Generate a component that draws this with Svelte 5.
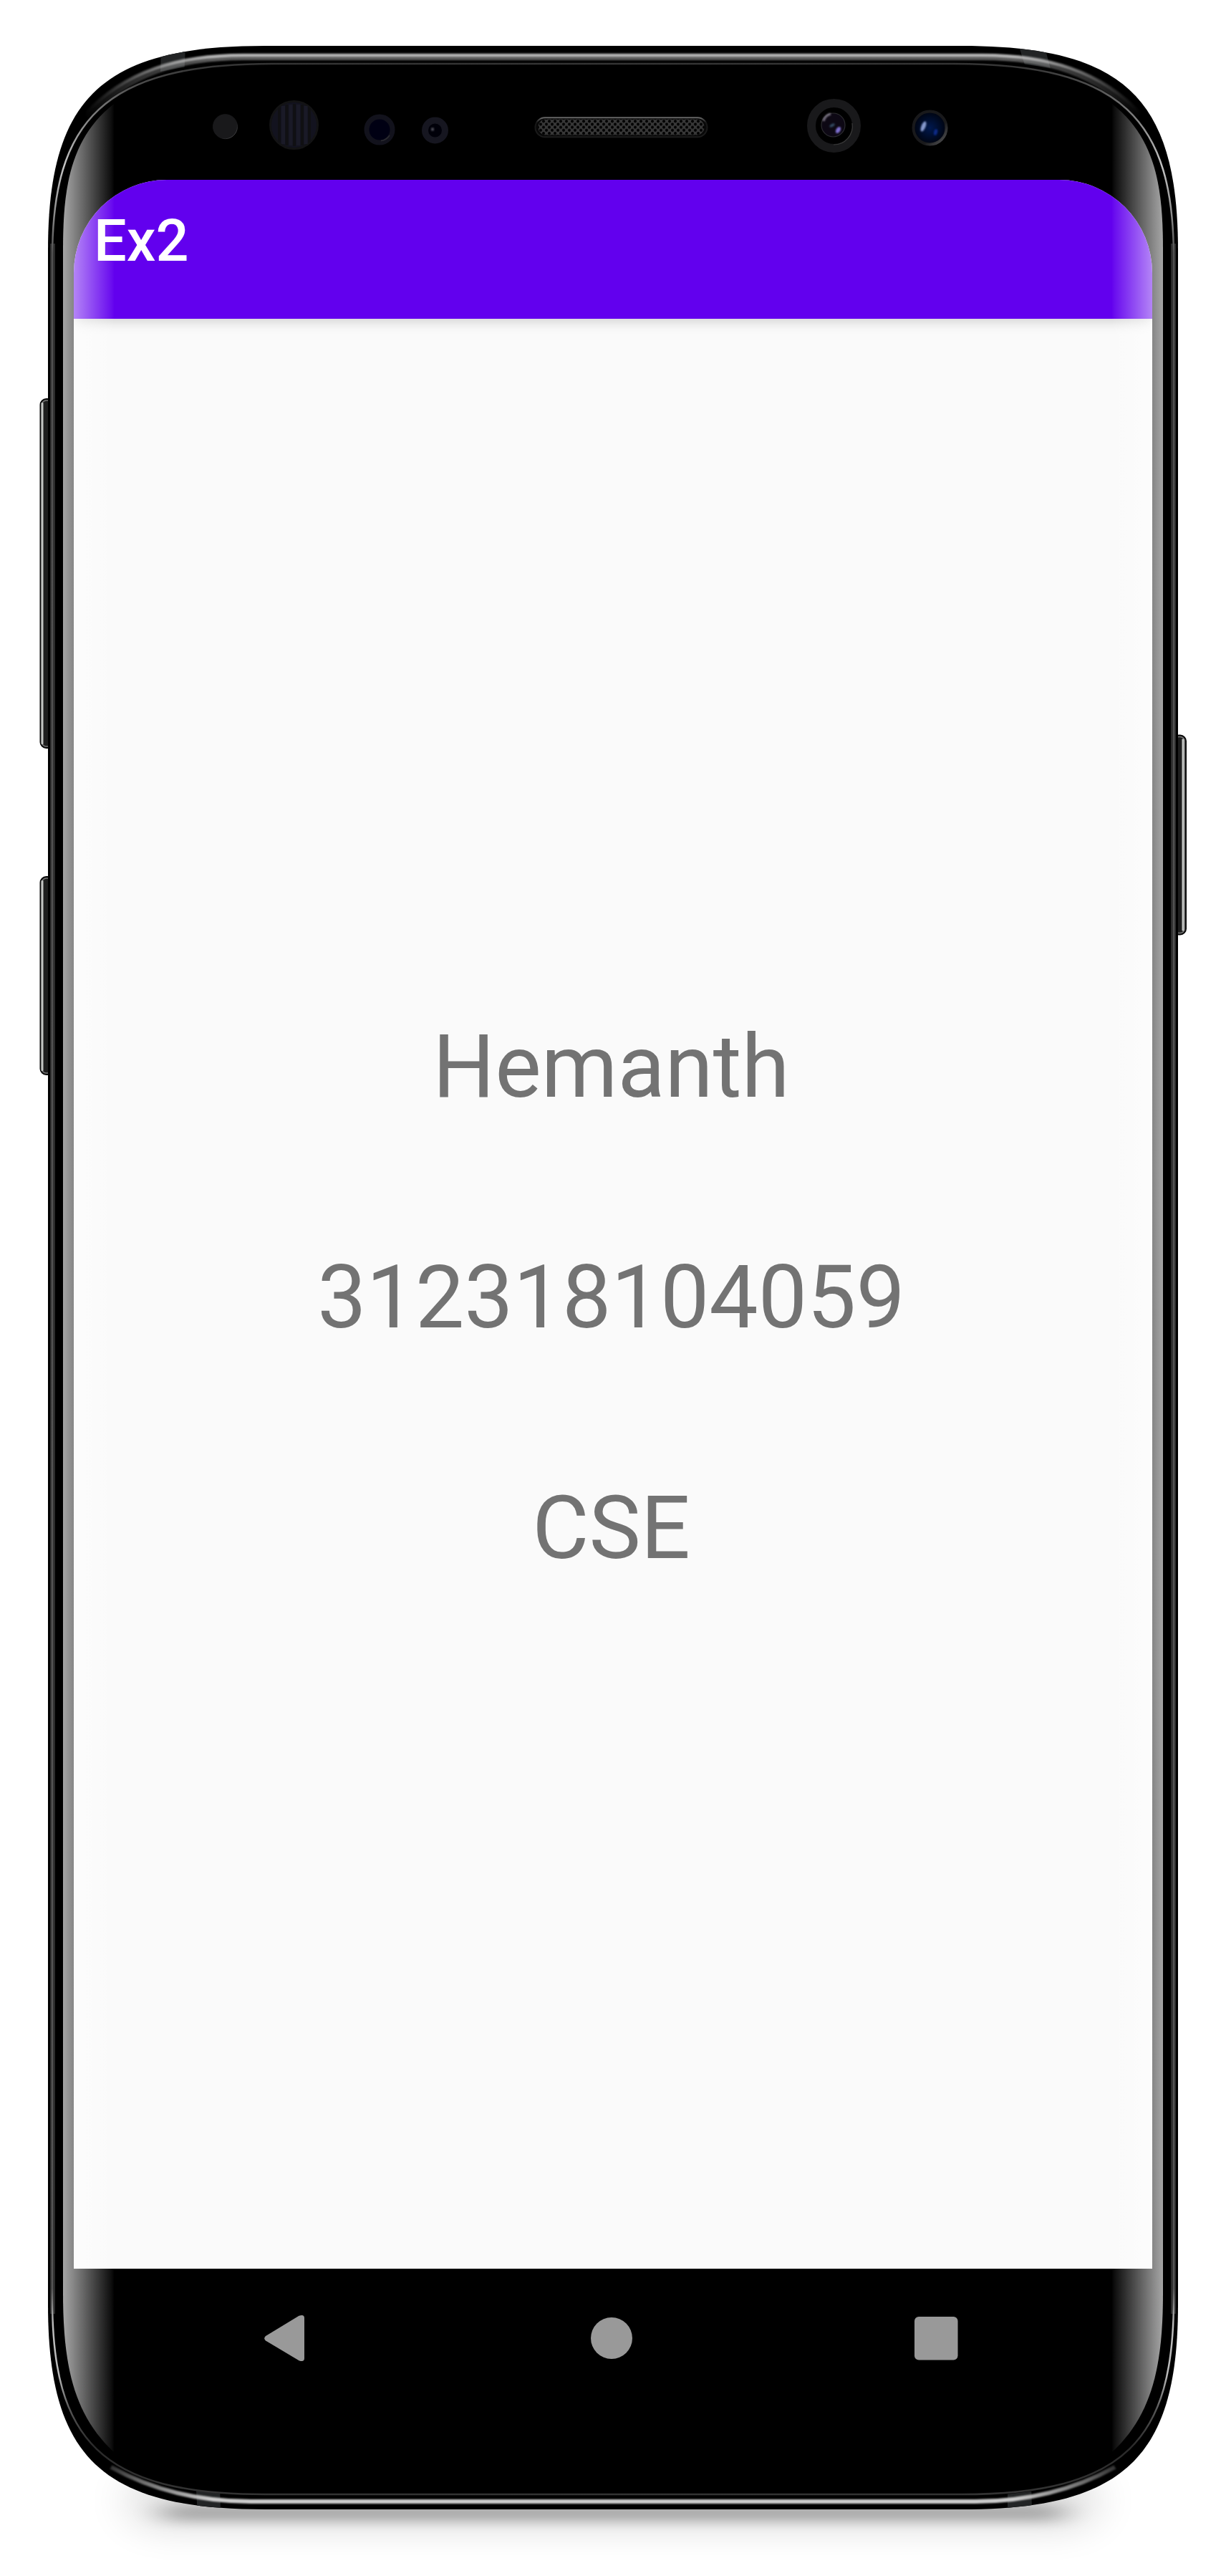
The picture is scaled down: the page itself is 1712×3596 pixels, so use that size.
<script>
  const lines = ['Hemanth', '312318104059', 'CSE'];

  const body =
    'M67 350C67 137 142 64 370 64H1342C1570 64 1645 137 1645 350V3217C1645 3430 1570 3503 1342 3503H370C142 3503 67 3430 67 3217Z';
  const innerLine =
    'M73 360C73 169 144 89 380 89H1332C1568 89 1639 169 1639 360V3210C1639 3405 1572 3482 1342 3482H370C140 3482 73 3405 73 3210Z';
  const topBand = 'M118 160C175 98 250 77 340 77H1372C1462 77 1537 98 1594 160';
  const topBandSoft = 'M122 164C179 102 250 80 340 80H1372C1462 80 1533 102 1590 164';
  const bottomBand = 'M155 3444C220 3480 290 3492 350 3492H1362C1422 3492 1492 3480 1557 3444';

  // Volume and assistant keys on the left, power key on the right
  const keys = [
    { x: 55.5, y: 556, h: 489, lit: 58 },
    { x: 55.5, y: 1223, h: 278, lit: 58 },
    { x: 1637, y: 1025.5, h: 280, lit: 1651 }
  ];
</script>

<div class="stage">
  <svg class="layer" viewBox="0 0 1712 3596" aria-hidden="true">
    <defs>
      <filter id="soft" filterUnits="userSpaceOnUse" x="0" y="3300" width="1712" height="296"><feGaussianBlur stdDeviation="30 24" /></filter>
      <filter id="tight" filterUnits="userSpaceOnUse" x="0" y="3300" width="1712" height="296"><feGaussianBlur stdDeviation="22 8" /></filter>
      <filter id="edge" filterUnits="userSpaceOnUse" x="0" y="0" width="1712" height="3596"><feGaussianBlur stdDeviation="1.2" /></filter>
      <linearGradient id="band" gradientUnits="userSpaceOnUse" x1="118" y1="0" x2="1594" y2="0">
        <stop offset="0" stop-color="#ccc" stop-opacity="0" />
        <stop offset=".05" stop-color="#ccc" stop-opacity=".5" />
        <stop offset=".12" stop-color="#ccc" />
        <stop offset=".88" stop-color="#ccc" />
        <stop offset=".95" stop-color="#ccc" stop-opacity=".5" />
        <stop offset="1" stop-color="#ccc" stop-opacity="0" />
      </linearGradient>
      <linearGradient id="thin" gradientUnits="userSpaceOnUse" x1="0" y1="88" x2="0" y2="3483">
        <stop offset="0" stop-color="#333" />
        <stop offset=".008" stop-color="#4a4a4a" />
        <stop offset=".025" stop-color="#888" />
        <stop offset=".042" stop-color="#c4c4c4" />
        <stop offset=".058" stop-color="#999" />
        <stop offset=".078" stop-color="#505050" />
        <stop offset=".915" stop-color="#555" />
        <stop offset=".93" stop-color="#bbb" />
        <stop offset=".95" stop-color="#bbb" />
        <stop offset=".965" stop-color="#555" />
        <stop offset=".98" stop-color="#2a2a2a" />
        <stop offset="1" stop-color="#333" />
      </linearGradient>
      <clipPath id="bodyClip"><path d={body} /></clipPath>
      <pattern id="mesh" width="8" height="8.4" patternUnits="userSpaceOnUse" x="757" y="167.2">
        <rect width="8" height="8.4" fill="#373737" />
        <circle cx="2" cy="2.1" r="2" />
        <circle cx="6" cy="6.3" r="2" />
      </pattern>
      <linearGradient id="grilleEdge" x1="0" y1="0" x2="0" y2="1">
        <stop offset="0" stop-color="#666" />
        <stop offset=".25" stop-color="#161616" />
        <stop offset="1" stop-color="#1c1c1c" />
      </linearGradient>
      <radialGradient id="lens"><stop offset="0" stop-color="#00184e" /><stop offset="1" stop-color="#00040f" /></radialGradient>
      <linearGradient id="rim" x1="0" y1="0" x2="1" y2="1">
        <stop offset="0" stop-color="#19191b" />
        <stop offset=".65" stop-color="#19191b" />
        <stop offset=".9" stop-color="#48484a" />
      </linearGradient>
      <filter id="glint"><feGaussianBlur stdDeviation="1" /></filter>
    </defs>

    <rect x="180" y="3450" width="1352" height="82" rx="40" fill="#000" opacity=".12" filter="url(#soft)" />
    <rect x="228" y="3496" width="1256" height="24" rx="10" fill="#000" opacity=".26" filter="url(#tight)" />

    {#each keys as key}
      <rect x={key.x + 1} y={key.y + 1} width="18" height={key.h - 2} rx="8" fill="#1e1e1e" stroke="#0a0a0a" stroke-width="2" />
      <rect x={key.x + 3} y={key.y + 3} width="14" height={key.h - 6} rx="6" fill="none" stroke="#777" stroke-width="1.6" />
      <rect x={key.lit - 0.5} y={key.y + 6} width="3" height={key.h - 12} rx="1" fill="#c4c6c4" />
    {/each}

    <path d={body} />
    <g clip-path="url(#bodyClip)">
      <path d="M73.5 340V3230M1638.500 340V3230" stroke="#2c2c2c" stroke-width="7" />
      <path d="M225 70L259 64L257.700 93.500L224 100ZM1422 62L1459 66L1466.700 95L1430.700 89.500ZM274 3477L307.300 3480.700L308 3503H275.500ZM1407 3481.700L1440.300 3477.700L1441 3503H1407Z" fill="#222425" />
      <path d={innerLine} fill="none" stroke="url(#thin)" stroke-width="2.500" />
      <g fill="none" stroke="url(#band)" filter="url(#edge)">
        <path d={topBandSoft} stroke-width="8" opacity=".45" />
        <path d={topBand} stroke-width="4.500" opacity=".8" />
        <path d={bottomBand} stroke-width="6" />
      </g>
    </g>

    <!-- Sensors and cameras -->
    <circle cx="314.500" cy="176.700" r="17" fill="#19191b" stroke="url(#rim)" />
    <circle cx="410.500" cy="174.500" r="33" fill="#13131f" stroke="#131314" stroke-width="3" />
    <path d="M390 150V199M400.500 146V203M411 145V204M422 146V203M432 150V199" stroke="#101013" stroke-width="4" />
    <path d="M395.500 148V201M406 146V203M416.500 146V203M427 148V201" stroke="#1a1a27" stroke-width="5" />
    <circle cx="530" cy="181" r="18" fill="#000013" stroke="#12121c" stroke-width="7" />
    <path d="M544 189A16.500 16.500 0 0 1 532 196.500" fill="none" stroke="#2b2b31" stroke-width="1.500" />
    <circle cx="607.500" cy="182" r="14" fill="#000009" stroke="#161620" stroke-width="9" />
    <circle cx="604" cy="180.500" r="2.200" fill="#50505a" filter="url(#glint)" />

    <rect x="747.500" y="164.300" width="240" height="27" rx="13.500" fill="#080808" stroke="url(#grilleEdge)" stroke-width="2" />
    <rect x="751.500" y="166.500" width="232" height="22" rx="11" fill="url(#mesh)" />

    <circle cx="1164.500" cy="175.500" r="31.500" fill="#000" stroke="#19191b" stroke-width="12" />
    <path d="M1190 172A26 26 0 0 1 1164 202" fill="none" stroke="#3a3a3a" stroke-width="1.200" />
    <circle cx="1163.500" cy="174.500" r="16.500" fill="#0d0814" stroke="#2c2c30" stroke-width="1.200" />
    <g filter="url(#glint)">
      <path d="M1150 169Q1152 161 1160 159" fill="none" stroke="#77717f" stroke-width="3" />
      <ellipse cx="1170.500" cy="181.500" rx="3" ry="5" transform="rotate(30 1170.500 181.500)" fill="#7e70cf" />
      <ellipse cx="1162" cy="175" rx="4" ry="2" transform="rotate(-30 1162 175)" fill="#31485f" />
    </g>
    <circle cx="1298.500" cy="178.500" r="23" fill="url(#lens)" stroke="url(#rim)" stroke-width="4" />
    <g filter="url(#glint)">
      <ellipse cx="1289.500" cy="176.500" rx="3" ry="7.500" transform="rotate(22 1289.500 176.500)" fill="#8598cc" />
      <ellipse cx="1306.500" cy="184.500" rx="2.500" ry="4.500" transform="rotate(15 1306.500 184.500)" fill="#082a86" />
    </g>
  </svg>

  <main class="screen">
    <header><h1>Ex2</h1></header>
    <section>
      {#each lines as line}
        <p>{line}</p>
      {/each}
    </section>
  </main>

  <nav>
    <svg width="58" height="66" viewBox="0 0 58 66" aria-label="Back"><path d="M3 30L49.500 1.800Q57 -1 57 5V61Q57 67 49.500 64.200L3 36.500Q-.5 33.200 3 30Z" fill="#999" /></svg>
    <svg class="home" width="60" height="60" viewBox="0 0 60 60" aria-label="Home"><circle cx="30" cy="30" r="29" fill="#999" /></svg>
    <svg width="61" height="61" viewBox="0 0 61 61" aria-label="Recents"><rect width="60.500" height="60.500" rx="6" fill="#999" /></svg>
  </nav>

  <!-- Light falling on the curved glass edges -->
  <svg class="layer" viewBox="0 0 1712 3596" aria-hidden="true">
    <defs>
      <linearGradient id="sheen" gradientUnits="userSpaceOnUse" x1="88" y1="0" x2="160" y2="0">
        <stop offset="0" stop-color="#fff" stop-opacity=".65" />
        <stop offset=".21" stop-color="#fff" stop-opacity=".52" />
        <stop offset=".93" stop-color="#fff" stop-opacity=".06" />
        <stop offset="1" stop-color="#fff" stop-opacity="0" />
      </linearGradient>
      <path id="glass" d="M88 350C88 270 95 195 159 145V3423C102 3370 88 3300 88 3200Z" fill="url(#sheen)" />
    </defs>
    <use href="#glass" />
    <use href="#glass" transform="matrix(-1 0 0 1 1712 0)" />
  </svg>
</div>

<style>
  :global(body) {
    margin: 0;
    background: #fff;
  }
  .stage {
    position: relative;
    box-sizing: border-box;
    width: 1712px;
    height: 3596px;
    padding: 251px 103px 0;
    overflow: hidden;
    font-family: Roboto, sans-serif;
  }
  .layer {
    position: absolute;
    inset: 0;
    width: 1712px;
    height: 3596px;
    pointer-events: none;
  }
  .screen {
    position: relative;
    display: flex;
    flex-direction: column;
    height: 2916px;
    overflow: hidden;
    border-radius: 130px 130px 0 0;
    background: #fafafa;
  }
  header {
    flex: none;
    box-sizing: border-box;
    height: 194px;
    padding: 39px 0 0 28px;
    background: #6200ee;
    box-shadow: 0 2px 18px rgba(0, 0, 0, 0.2);
  }
  h1 {
    margin: 0;
    color: #fff;
    font-size: 81px;
    line-height: 94px;
    font-weight: 500;
  }
  section {
    display: flex;
    flex-direction: column;
    gap: 180px;
    padding: 974px 5px 0 0;
    text-align: center;
  }
  p {
    margin: 0;
    color: #737373;
    font-size: 121.7px;
    line-height: 142px;
  }
  nav {
    position: relative;
    display: flex;
    justify-content: space-between;
    align-items: center;
    height: 194px;
    padding: 0 271px 0 265px;
  }
  .home {
    margin-left: 4px;
  }
</style>
